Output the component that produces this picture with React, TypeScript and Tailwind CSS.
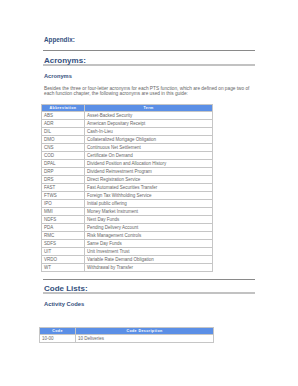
const acronyms: [string, string][] = [
  ['ABS', 'Asset-Backed Security'],
  ['ADR', 'American Depositary Receipt'],
  ['DIL', 'Cash-In-Lieu'],
  ['DMO', 'Collateralized Mortgage Obligation'],
  ['CNS', 'Continuous Net Settlement'],
  ['COD', 'Certificate On Demand'],
  ['DPAL', 'Dividend Position and Allocation History'],
  ['DRP', 'Dividend Reinvestment Program'],
  ['DRS', 'Direct Registration Service'],
  ['FAST', 'Fast Automated Securities Transfer'],
  ['FTWS', 'Foreign Tax Withholding Service'],
  ['IPO', 'Initial public offering'],
  ['MMI', 'Money Market Instrument'],
  ['NDFS', 'Next Day Funds'],
  ['PDA', 'Pending Delivery Account'],
  ['RMC', 'Risk Management Controls'],
  ['SDFS', 'Same Day Funds'],
  ['UIT', 'Unit Investment Trust'],
  ['VRDO', 'Variable Rate Demand Obligation'],
  ['WT', 'Withdrawal by Transfer'],
];

function DocTable({
  cols,
  head,
  rows,
}: {
  cols: string;
  head: [string, string];
  rows: [string, string][];
}) {
  return (
    <div className={`grid ${cols} gap-px bg-[#c6c6c6] p-px`}>
      {head.map((h) => (
        <div
          key={h}
          className="h-[6px] bg-[#5b8fe6] text-center text-[3.6px] font-bold leading-[6px] tracking-[0.4px] text-white"
        >
          {h}
        </div>
      ))}
      {rows.map(([a, b]) => [
        <div key={a} className="h-[7px] bg-white pl-[2px] text-[4.5px] leading-[7px] text-[#666]">
          {a}
        </div>,
        <div key={a + b} className="h-[7px] bg-white pl-[2px] text-[4.5px] leading-[7px] text-[#666]">
          {b}
        </div>,
      ])}
    </div>
  );
}

export default function App() {
  return (
    <div className="h-[386px] w-[298px] overflow-hidden bg-white font-['Liberation_Sans',Arial,sans-serif]">
      <div className="ml-[43px] w-[212px] pt-[36px]">
        <div className="pl-px text-[6.3px] font-bold leading-[8px] text-[#34507e]">Appendix:</div>
        <div className="mt-[6px] h-px bg-[#8a8a8a]" />
        <div className="mt-[5.5px] pl-px text-[8px] font-bold leading-[7px] text-[#34507e]">Acronyms:</div>
        <div className="h-[2px] bg-[#c2c2c2]" />
        <div className="mt-[7px] pl-px text-[5.7px] font-bold leading-[7px] text-[#34507e]">Acronyms</div>
        <p className="mt-[6.5px] w-[208px] pl-px text-[4.75px] leading-[5px] text-[#666]">
          Besides the three or four-letter acronyms for each PTS function, which are defined on page two of
          each function chapter, the following acronyms are used in this guide:
        </p>
        <div className="-ml-[2px] mt-[8px] w-[172px]">
          <DocTable cols="grid-cols-[42px_1fr]" head={['Abbreviation', 'Term']} rows={acronyms} />
        </div>
        <div className="mt-[7px] h-px bg-[#8a8a8a]" />
        <div className="mt-[4.5px] pl-px text-[8px] font-bold leading-[7px] text-[#34507e]">Code Lists:</div>
        <div className="h-[2px] bg-[#c2c2c2]" />
        <div className="mt-[7.3px] pl-px text-[5.8px] font-bold leading-[7px] text-[#34507e]">Activity Codes</div>
        <div className="-ml-[4px] mt-[19.5px] w-[175px]">
          <DocTable cols="grid-cols-[35px_1fr]" head={['Code', 'Code Description']} rows={[['10-00', '10 Deliveries']]} />
        </div>
      </div>
    </div>
  );
}
